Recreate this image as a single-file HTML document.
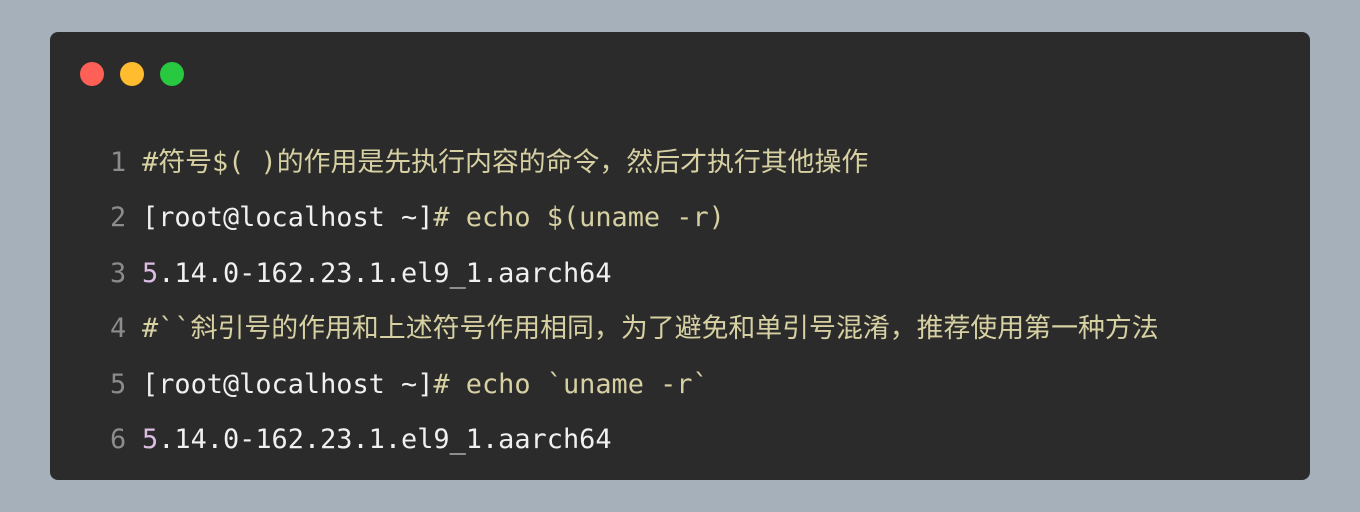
<!DOCTYPE html>
<html><head><meta charset="utf-8"><style>
html,body{margin:0;padding:0;}
body{width:1360px;height:512px;background:#a6b0bb;position:relative;overflow:hidden;}
.card{position:absolute;left:50px;top:32px;width:1260px;height:448px;background:#2b2b2b;border-radius:8px;}
.dot{position:absolute;top:30px;width:24px;height:24px;border-radius:50%;}
.code{position:absolute;left:60px;top:103px;font-family:"DejaVu Sans Mono","Liberation Mono","Noto Sans CJK SC",monospace;font-size:26.9px;color:#f0f0f0;}
.l{height:55.4px;line-height:55.4px;white-space:pre;}
.n{color:#8c8c8c;display:inline-block;width:16px;text-align:right;margin-right:16px;}
.c{color:#d6d0a2;}
.p{color:#dcbde4;}
</style></head><body>
<div class="card">
<div class="dot" style="left:30px;background:#fe5f57"></div>
<div class="dot" style="left:70px;background:#febc2e"></div>
<div class="dot" style="left:110px;background:#28c840"></div>
<div class="code"><div class="l"><span class="n">1</span><span class="c">#符号$( )的作用是先执行内容的命令，然后才执行其他操作</span></div><div class="l"><span class="n">2</span>[root@localhost ~]<span class="c"># echo $(uname -r)</span></div><div class="l"><span class="n">3</span><span class="p">5</span>.14.0-162.23.1.el9_1.aarch64</div><div class="l"><span class="n">4</span><span class="c">#``斜引号的作用和上述符号作用相同，为了避免和单引号混淆，推荐使用第一种方法</span></div><div class="l"><span class="n">5</span>[root@localhost ~]<span class="c"># echo `uname -r`</span></div><div class="l"><span class="n">6</span><span class="p">5</span>.14.0-162.23.1.el9_1.aarch64</div></div>
</div>
</body></html>
